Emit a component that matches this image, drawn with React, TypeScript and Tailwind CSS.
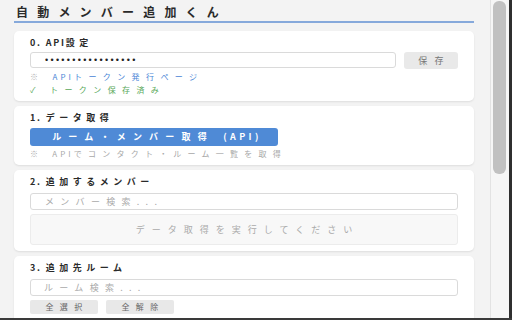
import type { ReactNode } from "react";

const font = "font-['Noto_Sans_CJK_JP','Noto_Sans',sans-serif]";

// latin runs get a tighter letter-spacing than the kana/kanji around them
const L = ({ children }: { children: ReactNode }) => (
  <span className="tracking-[0.38em]">{children}</span>
);

const Card = ({ children }: { children: ReactNode }) => (
  <section className="rounded-[5px] bg-white px-[16px] pt-[6px] pb-[6px] shadow-[0_1px_2px_rgba(0,0,0,0.09)]">
    {children}
  </section>
);

const Heading = ({ num, children }: { num: string; children: ReactNode }) => (
  <h2 className="text-[9px] leading-[12px] font-bold tracking-[4.5px] text-[#2a2a2a]">
    <span className="tracking-[1.8px]">{num}</span>
    {children}
  </h2>
);

const GrayButton = ({ label }: { label: string }) => (
  <button className="block h-[14px] w-[68px] rounded-[2px] bg-[#e8e8e8] pl-[6px] text-[8px] leading-[14px] tracking-[0.8em] text-[#666]">
    {label}
  </button>
);

export default function App() {
  return (
    <div className={`${font} flex h-[320px] w-[512px] flex-col overflow-hidden bg-[#f3f3f3]`}>
      <div className="flex h-[318px]">
        <main className="flex w-[490px] flex-col overflow-hidden pt-[4px] pr-[16px] pl-[14px]">
          <h1 className="mb-[8px] border-b-2 border-[#86a9db] pb-[1px] pl-[2px] text-[12px] leading-[16px] font-bold tracking-[9.2px] text-[#2a2a2a]">
            自動メンバー追加くん
          </h1>

          <div className="flex flex-col gap-[5px]">
            <Card>
              <Heading num="0. API">設定</Heading>
              <div className="mt-[3px] flex gap-[8px]">
                <input
                  type="password"
                  readOnly
                  value="abcdefghijklmnopq"
                  className="block h-[16px] flex-1 rounded-[3px] border border-[#dadada] bg-white pl-[14px] font-['Liberation_Sans',sans-serif] text-[9px] tracking-[2.3px] text-[#222] outline-none"
                />
                <button className="block h-[17px] w-[54px] rounded-[3px] bg-[#e9e9e9] pl-[7px] text-[9px] leading-[17px] tracking-[0.8em] text-[#777]">
                  保存
                </button>
              </div>
              <p className="mt-[3px] text-[8px] leading-[10px] tracking-[0.8em]">
                <span className="text-[#b0b0b0]">※ </span>
                <a className="text-[#4a86d6]">
                  <L>API</L>トークン発行ページ
                </a>
              </p>
              <p className="mt-[3px] text-[8px] leading-[10px] tracking-[0.8em] text-[#5aa95a]">
                ✓ トークン保存済み
              </p>
            </Card>

            <Card>
              <Heading num="1. ">データ取得</Heading>
              <button className="mt-[4px] block h-[18px] w-[248px] rounded-[3px] bg-[#4f8ad6] pl-[6px] text-[9px] leading-[18px] font-bold tracking-[0.8em] text-white">
                ルーム・メンバー取得 <L>(API)</L>
              </button>
              <p className="mt-[3px] text-[8px] leading-[10px] tracking-[0.78em] text-[#a8a8a8]">
                ※ <L>API</L>でコンタクト・ルーム一覧を取得
              </p>
            </Card>

            <Card>
              <Heading num="2. ">追加するメンバー</Heading>
              <input
                placeholder="メンバー検索..."
                className="mt-[5px] block h-[17px] w-full rounded-[3px] border border-[#dadada] bg-white pl-[14px] text-[9px] tracking-[0.7em] text-[#333] outline-none placeholder:text-[#aaa]"
              />
              <div className="mt-[4px] flex h-[31px] items-center justify-center rounded-[3px] border border-[#ececec] bg-[#f8f8f8] pl-[7px] text-[9px] tracking-[0.78em] text-[#aaa]">
                データ取得を実行してください
              </div>
            </Card>

            <Card>
              <Heading num="3. ">追加先ルーム</Heading>
              <input
                placeholder="ルーム検索..."
                className="mt-[5px] block h-[17px] w-full rounded-[3px] border border-[#dadada] bg-white pl-[13px] text-[9px] tracking-[0.7em] text-[#333] outline-none placeholder:text-[#aaa]"
              />
              <div className="mt-[4px] flex gap-[8px]">
                <GrayButton label="全選択" />
                <GrayButton label="全解除" />
              </div>
              <div className="mt-[6px] h-[40px] rounded-[3px] border border-[#ececec] bg-[#f8f8f8]" />
            </Card>
          </div>
        </main>

        <div className="w-[19px] border-l border-[#e3e3e3] bg-[#f6f6f6] pt-[1px] pl-[2px]">
          <div className="h-[173px] w-[13px] rounded-[6px] bg-[#c1c1c1]" />
        </div>
        <div className="w-[3px] bg-[#2f2f2f]" />
      </div>
      <div className="h-[2px] bg-[#3a3a3a]" />
    </div>
  );
}
